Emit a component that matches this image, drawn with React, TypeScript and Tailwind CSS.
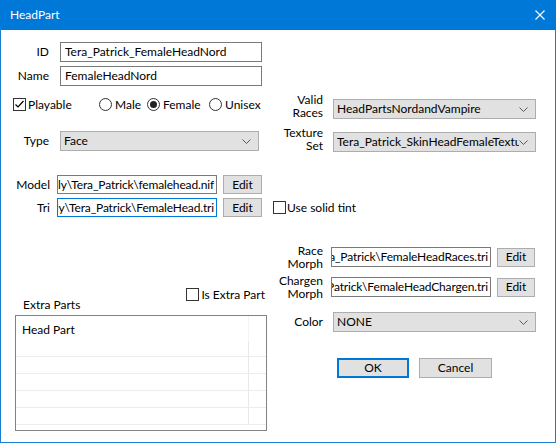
import React from 'react';

type Props = { className?: string; children?: React.ReactNode };

function Chevron() {
  return (
    <svg width="9" height="5" viewBox="0 0 9 5" className="shrink-0">
      <polyline points="0.5,0.5 4.5,4.5 8.5,0.5" fill="none" stroke="#5a5a5a" strokeWidth="1" />
    </svg>
  );
}

function Select({ className = '', children }: Props) {
  return (
    <div className={`h-[20px] shrink-0 flex items-center border border-[#adadad] bg-[#e1e1e1] pl-[3px] pr-[7px] ${className}`}>
      <span className="flex-1 overflow-hidden whitespace-nowrap">{children}</span>
      <Chevron />
    </div>
  );
}

// path fields are scrolled to their end, so the start of the text is cut off
function PathBox({ className = '', focused = false, children }: Props & { focused?: boolean }) {
  return (
    <div
      className={`h-[20px] shrink-0 flex items-center justify-end overflow-hidden whitespace-nowrap bg-white pr-[2px] tracking-[-0.15px] border ${
        focused ? 'border-[#0078d7]' : 'border-[#7a7a7a]'
      } ${className}`}
    >
      {children}
    </div>
  );
}

function TextBox({ className = '', children }: Props) {
  return (
    <div className={`h-[20px] shrink-0 flex items-center overflow-hidden whitespace-nowrap bg-white pl-[4px] border border-[#7a7a7a] ${className}`}>
      {children}
    </div>
  );
}

function Button({ className = '', children }: Props) {
  return (
    <button className={`shrink-0 flex items-center justify-center bg-[#e1e1e1] border border-[#adadad] ${className}`}>
      {children}
    </button>
  );
}

function CheckBox({ checked = false }: { checked?: boolean }) {
  return (
    <span className="w-[13px] h-[13px] shrink-0 border border-[#333] bg-white flex items-center justify-center">
      {checked && (
        <svg width="11" height="11" viewBox="0 0 11 11">
          <polyline points="1.5,5.5 4,8 9.5,2" fill="none" stroke="#000" strokeWidth="1.2" />
        </svg>
      )}
    </span>
  );
}

function Radio({ checked = false }: { checked?: boolean }) {
  return (
    <span className="w-[13px] h-[13px] shrink-0 rounded-full border border-[#333] bg-white flex items-center justify-center">
      {checked && <span className="w-[7px] h-[7px] rounded-full bg-[#222]" />}
    </span>
  );
}

const listRows = [15, 17, 17, 17, 17];

export default function App() {
  return (
    <div className="w-[556px] h-[443px] flex flex-col bg-[#1a7fd4] [font-family:Lato,'Noto_Sans',sans-serif] text-[12px] text-black">
      {/* Title bar */}
      <div className="h-[30px] shrink-0 flex items-center justify-between pl-[10px] pr-[11px] bg-[#0078d7] text-white">
        <span>HeadPart</span>
        <svg width="10" height="10" viewBox="0 0 10 10">
          <path d="M0.5 0.5 L9.5 9.5 M9.5 0.5 L0.5 9.5" stroke="#fff" strokeWidth="1.1" />
        </svg>
      </div>

      <div className="flex-1 mx-[1px] mb-[1px] bg-white flex flex-col">
        {/* ID / Name */}
        <div className="mt-[12px] flex items-center h-[20px]">
          <span className="w-[48px] shrink-0 text-right">ID</span>
          <TextBox className="ml-[11px] w-[202px]">Tera_Patrick_FemaleHeadNord</TextBox>
        </div>
        <div className="mt-[4px] flex items-center h-[20px]">
          <span className="w-[48px] shrink-0 text-right">Name</span>
          <TextBox className="ml-[11px] w-[202px]">FemaleHeadNord</TextBox>
        </div>

        <div className="flex items-start">
          {/* Left column */}
          <div className="w-[269px] shrink-0 flex flex-col">
            <div className="mt-[12px] h-[13px] flex items-center">
              <label className="ml-[12px] w-[86px] shrink-0 flex items-center gap-[2px]">
                <CheckBox checked />
                <span>Playable</span>
              </label>
              <label className="w-[48px] shrink-0 flex items-center gap-[3px]">
                <Radio />
                <span>Male</span>
              </label>
              <label className="w-[62px] shrink-0 flex items-center gap-[3px]">
                <Radio checked />
                <span>Female</span>
              </label>
              <label className="shrink-0 flex items-center gap-[3px]">
                <Radio />
                <span>Unisex</span>
              </label>
            </div>

            <div className="mt-[20px] h-[20px] flex items-center">
              <span className="w-[48px] shrink-0 text-right">Type</span>
              <Select className="ml-[11px] w-[199px]">Face</Select>
            </div>

            <div className="mt-[24px] h-[19px] flex items-center">
              <span className="w-[49px] shrink-0 text-right">Model</span>
              <PathBox className="ml-[7px] w-[160px] !h-[19px]">ly\Tera_Patrick\femalehead.nif</PathBox>
              <Button className="ml-[6px] w-[39px] h-[19px]">Edit</Button>
            </div>

            <div className="mt-[4px] h-[19px] flex items-center">
              <span className="w-[49px] shrink-0 text-right">Tri</span>
              <PathBox focused className="ml-[7px] w-[160px] !h-[19px]">
                ly\Tera_Patr<span className="inline-block w-[1px] h-[13px] bg-black align-middle" />ick\FemaleHead.tri
              </PathBox>
              <Button className="ml-[6px] w-[39px] h-[19px]">Edit</Button>
              <label className="ml-[11px] flex items-center gap-[1px] shrink-0 whitespace-nowrap">
                <CheckBox />
                <span>Use solid tint</span>
              </label>
            </div>

            <div className="mt-[71px] w-[264px] flex items-start justify-between">
              <span className="ml-[22px] mt-[9px] leading-[16px]">Extra Parts</span>
              <label className="h-[13px] flex items-center gap-[2px]">
                <CheckBox />
                <span>Is Extra Part</span>
              </label>
            </div>

            {/* Extra parts list */}
            <div className="mt-[2px] ml-[14px] w-[252px] h-[116px] border border-[#828282] bg-white flex flex-col">
              <div className="h-[26px] flex">
                <span className="w-[232px] pl-[6px] pt-[5px]">Head Part</span>
                <span className="flex-1 border-l border-[#f4f4f4]" />
              </div>
              {listRows.map((h, i) => (
                <div key={i} className="flex border-b border-[#ececec]" style={{ height: h }}>
                  <span className="w-[232px]" />
                  <span className="flex-1 border-l border-[#e8e8e8]" />
                </div>
              ))}
            </div>
          </div>

          {/* Right column */}
          <div className="flex-1 flex flex-col">
            <div className="mt-[7px] flex items-end">
              <span className="w-[53px] shrink-0 text-right leading-[13px]">Valid<br />Races</span>
              <Select className="ml-[10px] w-[203px]">HeadPartsNordandVampire</Select>
            </div>

            <div className="mt-[7px] flex items-end">
              <span className="w-[53px] shrink-0 text-right leading-[13px]">Texture<br />Set</span>
              <Select className="ml-[10px] w-[203px]">Tera_Patrick_SkinHeadFemaleTextureSet</Select>
            </div>

            <div className="mt-[92px] flex items-center">
              <span className="w-[53px] shrink-0 text-right leading-[13px]">Race<br />Morph</span>
              <PathBox className="ml-[8px] w-[160px]">a_Patrick\FemaleHeadRaces.tri</PathBox>
              <Button className="ml-[6px] w-[38px] h-[19px]">Edit</Button>
            </div>

            <div className="mt-[4px] flex items-center">
              <span className="w-[53px] shrink-0 text-right leading-[13px]">Chargen<br />Morph</span>
              <PathBox className="ml-[8px] w-[160px]">Patrick\FemaleHeadChargen.tri</PathBox>
              <Button className="ml-[6px] w-[38px] h-[19px]">Edit</Button>
            </div>

            <div className="mt-[12px] flex items-center">
              <span className="w-[53px] shrink-0 text-right">Color</span>
              <Select className="ml-[10px] w-[203px]">NONE</Select>
            </div>

            <div className="mt-[26px] flex">
              <Button className="ml-[67px] w-[72px] h-[20px] !border-2 !border-[#0078d7]">OK</Button>
              <Button className="ml-[10px] w-[73px] h-[20px]">Cancel</Button>
            </div>
          </div>
        </div>
      </div>
    </div>
  );
}
